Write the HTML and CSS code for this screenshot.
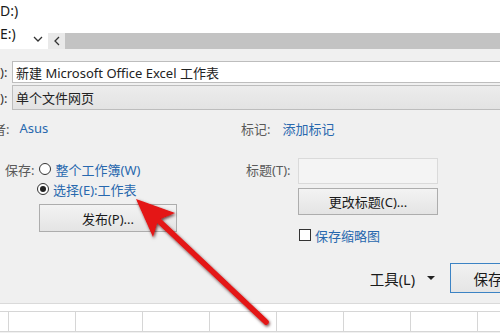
FILE: index.html
```html
<!DOCTYPE html>
<html lang="zh-CN">
  <head>
    <meta charset="UTF-8" />
    <meta name="viewport" content="width=device-width, initial-scale=1.0" />
    <title>另存为</title>
    <link rel="stylesheet" href="styles.css">
  </head>
  <body>
    <div class="browse">
      <div class="nav-pane">
        <div class="drive">D:)</div>
        <div class="drive">E:)</div>
      </div>
      <div class="vscroll">
        <svg class="chev" width="10" height="6" viewBox="0 0 10 6">
          <path d="M1 1 L5 5 L9 1" fill="none" stroke="#333" stroke-width="1.3" />
        </svg>
      </div>
      <div class="files">
        <div class="file-area"></div>
        <div class="hscroll">
          <div class="scroll-btn">
            <svg width="6" height="10" viewBox="0 0 6 10">
              <path d="M5 1 L1 5 L5 9" fill="none" stroke="#333" stroke-width="1.3" />
            </svg>
          </div>
          <div class="thumb"></div>
        </div>
      </div>
    </div>

    <div class="dialog">
      <div class="field-row name-row">
        <span class="field-label">):</span>
        <div class="text-input">新建 Microsoft Office Excel 工作表</div>
      </div>
      <div class="field-row type-row">
        <span class="field-label">):</span>
        <div class="select-input">单个文件网页</div>
      </div>

      <div class="meta">
        <div class="meta-left">
          <div class="meta-row author-row">
            <span class="muted">者:</span>
            <a class="link author">Asus</a>
          </div>
          <div class="save-row">
            <span class="muted">保存:</span>
            <span class="radio"></span>
            <span class="link">整个工作簿(W)</span>
          </div>
          <div class="radio-row">
            <span class="radio checked"></span>
            <span class="link">选择(E):工作表</span>
          </div>
          <button class="btn publish-btn">发布(P)...</button>
        </div>

        <div class="meta-right">
          <div class="meta-row">
            <span class="muted">标记:</span>
            <a class="link tag">添加标记</a>
          </div>
          <div class="title-row">
            <span class="muted title-label">标题(T):</span>
            <div class="title-input"></div>
          </div>
          <button class="btn title-btn">更改标题(C)...</button>
          <div class="check-row">
            <span class="checkbox"></span>
            <span class="link">保存缩略图</span>
          </div>
        </div>
      </div>

      <div class="actions">
        <span class="tools">工具(L)</span>
        <span class="caret"></span>
        <button class="btn save-btn">保存</button>
      </div>
    </div>

    <div class="sheet">
      <div class="sheet-row">
        <div class="cell head"></div>
        <div class="cell"></div>
        <div class="cell"></div>
        <div class="cell"></div>
        <div class="cell"></div>
        <div class="cell"></div>
        <div class="cell"></div>
        <div class="cell"></div>
      </div>
    </div>

    <!-- red pointer drawn over the dialog -->
    <svg class="pointer" width="500" height="333" viewBox="0 0 500 333">
      <defs>
        <filter id="shade" x="-20%" y="-20%" width="140%" height="140%">
          <feDropShadow dx="1" dy="1.5" stdDeviation="1.6" flood-color="#3a0000" flood-opacity="0.75" />
        </filter>
      </defs>
      <g filter="url(#shade)">
        <line x1="158" y1="220" x2="266" y2="322" stroke="#e41313" stroke-width="5.5" stroke-linecap="round" />
        <polygon points="136,199 175,213 158,220 153,237" fill="#e41313" />
      </g>
    </svg>
  </body>
</html>
```

FILE: styles.css
```css
* {
  margin: 0;
  padding: 0;
  box-sizing: border-box;
}

body {
  width: 500px;
  height: 333px;
  overflow: hidden;
  position: relative;
  background: #f0f0f0;
  font-family: "Noto Sans", "Noto Sans CJK SC", sans-serif;
  font-size: 13px;
  color: #222;
}

/* file browser strip */
.browse {
  height: 49px;
  display: flex;
  background: #fff;
}

.nav-pane {
  width: 28px;
  padding-top: 1px;
  overflow: hidden;
}

.drive {
  height: 23px;
  line-height: 20px;
  font-size: 14px;
  color: #1a1a1a;
  white-space: nowrap;
}

.vscroll {
  width: 20px;
  display: flex;
  align-items: flex-end;
  justify-content: center;
  padding-bottom: 7px;
}

.files {
  flex: 1;
  display: flex;
  flex-direction: column;
}

.file-area {
  flex: 1;
}

.hscroll {
  height: 16px;
  display: flex;
  background: #e9e9e9;
}

.scroll-btn {
  width: 17px;
  display: flex;
  align-items: center;
  justify-content: center;
}

.thumb {
  flex: 1;
  background: #c3c3c3;
}

/* dialog form */
.dialog {
  padding-top: 12px;
  padding-bottom: 10px;
  border-bottom: 1px solid #dadada;
}

.field-row {
  display: flex;
  align-items: center;
}

.field-label {
  width: 12px;
  color: #333;
  font-size: 13px;
}

.text-input,
.select-input {
  flex: 1;
  display: flex;
  align-items: center;
  padding-left: 3px;
  white-space: nowrap;
  border: 1px solid #bdbdbd;
  border-right: none;
}

.text-input {
  height: 22px;
  background: #fff;
}

.type-row {
  margin-top: 2px;
}

.select-input {
  height: 25px;
  background: linear-gradient(#ececec, #e3e3e3);
}

.meta {
  display: flex;
}

.meta-left {
  width: 241px;
  display: flex;
  flex-direction: column;
  align-items: flex-start;
}

.meta-right {
  flex: 1;
  display: flex;
  flex-direction: column;
  align-items: flex-start;
}

.meta-row {
  height: 22px;
  margin-top: 7px;
  display: flex;
  align-items: center;
}

.author-row {
  margin-left: -7px;
}

.muted {
  color: #5a5a5a;
}

.link {
  color: #2868ae;
  white-space: nowrap;
}

.author {
  margin-left: 10px;
}

.tag {
  margin-left: 12px;
}

.save-row {
  height: 20px;
  margin-top: 20px;
  padding-left: 5px;
  display: flex;
  align-items: center;
  gap: 4px;
}

.save-row .radio {
  margin-left: 1px;
}

.radio-row {
  height: 20px;
  padding-left: 37px;
  display: flex;
  align-items: center;
  gap: 4px;
}

.radio {
  width: 12px;
  height: 12px;
  border: 1px solid #333;
  border-radius: 50%;
  background: #fff;
  display: flex;
  align-items: center;
  justify-content: center;
}

.radio.checked::after {
  content: "";
  width: 6px;
  height: 6px;
  border-radius: 50%;
  background: #222;
}

.btn {
  font-family: inherit;
  font-size: 13px;
  color: #1a1a1a;
  border: 1px solid #adadad;
  background: linear-gradient(#f3f3f3, #e4e4e4);
}

.publish-btn {
  margin-top: 5px;
  margin-left: 39px;
  width: 138px;
  height: 28px;
}

.title-row {
  margin-top: 19px;
  display: flex;
  align-items: center;
}

.title-label {
  width: 57px;
  padding-left: 5px;
  margin-top: -3px;
}

.title-input {
  width: 140px;
  height: 26px;
  border: 1px solid #dadada;
  background: #f4f4f4;
}

.title-btn {
  margin-top: 4px;
  margin-left: 57px;
  width: 140px;
  height: 27px;
}

.check-row {
  margin-top: 13px;
  margin-left: 58px;
  height: 14px;
  display: flex;
  align-items: center;
  gap: 4px;
}

.checkbox {
  width: 12px;
  height: 12px;
  border: 1px solid #333;
  background: #fff;
}

.actions {
  margin-top: 21px;
  height: 30px;
  display: flex;
  align-items: center;
  justify-content: flex-end;
}

.tools {
  font-size: 14.5px;
  color: #1a1a1a;
}

.caret {
  margin-left: 12px;
  width: 0;
  height: 0;
  border-left: 4px solid transparent;
  border-right: 4px solid transparent;
  border-top: 4px solid #222;
}

.save-btn {
  margin-left: 15px;
  margin-right: -26px;
  width: 76px;
  height: 30px;
  font-size: 14.5px;
  border-color: #3c83c4;
  background: linear-gradient(#f1f1f1, #e5e5e5);
}

/* sheet grid under the dialog */
.sheet {
  background: #fff;
  padding-top: 7px;
}

.sheet-row {
  display: flex;
  border-top: 1px solid #d6d6d6;
  border-bottom: 1px solid #d6d6d6;
}

.cell {
  width: 67px;
  height: 19px;
  flex-shrink: 0;
  border-right: 1px solid #d6d6d6;
}

.cell.head {
  width: 9px;
}

.pointer {
  position: absolute;
  left: 0;
  top: 0;
  pointer-events: none;
}
```
